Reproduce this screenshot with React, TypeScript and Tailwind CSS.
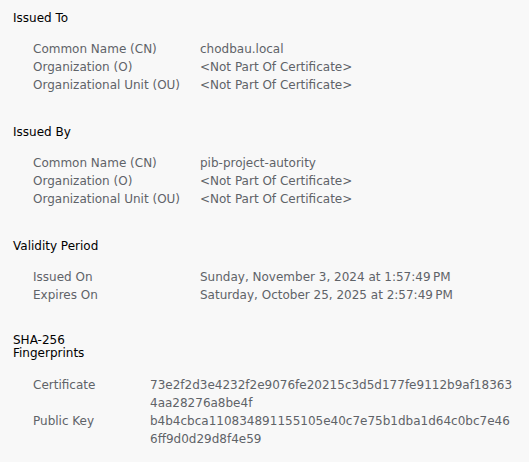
const sections = [
  {
    title: "Issued To",
    rows: [
      ["Common Name (CN)", "chodbau.local"],
      ["Organization (O)", "<Not Part Of Certificate>"],
      ["Organizational Unit (OU)", "<Not Part Of Certificate>"],
    ],
  },
  {
    title: "Issued By",
    rows: [
      ["Common Name (CN)", "pib-project-autority"],
      ["Organization (O)", "<Not Part Of Certificate>"],
      ["Organizational Unit (OU)", "<Not Part Of Certificate>"],
    ],
  },
  {
    title: "Validity Period",
    rows: [
      ["Issued On", "Sunday, November 3, 2024 at 1:57:49\u202FPM"],
      ["Expires On", "Saturday, October 25, 2025 at 2:57:49\u202FPM"],
    ],
  },
];

const fingerprints = [
  ["Certificate", "73e2f2d3e4232f2e9076fe20215c3d5d177fe9112b9af18363", "4aa28276a8be4f"],
  ["Public Key", "b4b4cbca110834891155105e40c7e75b1dba1d64c0bc7e46", "6ff9d0d29d8f4e59"],
];

export default function App() {
  return (
    <main className="min-h-screen w-[529px] bg-[#f8f8f8] pl-[13px] pt-[9px] text-[12px] leading-[18px] font-['DejaVu_Sans',sans-serif]">
      {sections.map((s) => (
        <section key={s.title} className="mb-[29px]">
          <h2 className="text-black">{s.title}</h2>
          <div className="mt-[13px] flex flex-col pl-[20px]">
            {s.rows.map(([label, value]) => (
              <div key={label} className="flex text-[#5f6368]">
                <span className="w-[167px] shrink-0">{label}</span>
                <span>{value}</span>
              </div>
            ))}
          </div>
        </section>
      ))}

      {/* fingerprints (margin collapses with the section above) */}
      <section className="mt-[30px]">
        <h2 className="text-black leading-[13px]">
          SHA-256
          <br />
          Fingerprints
        </h2>
        <div className="mt-[16px] flex flex-col pl-[20px] text-[#5f6368]">
          {fingerprints.map(([label, a, b]) => (
            <div key={label} className="flex">
              <span className="w-[117px] shrink-0">{label}</span>
              <span>
                {a}
                <br />
                {b}
              </span>
            </div>
          ))}
        </div>
      </section>
    </main>
  );
}
